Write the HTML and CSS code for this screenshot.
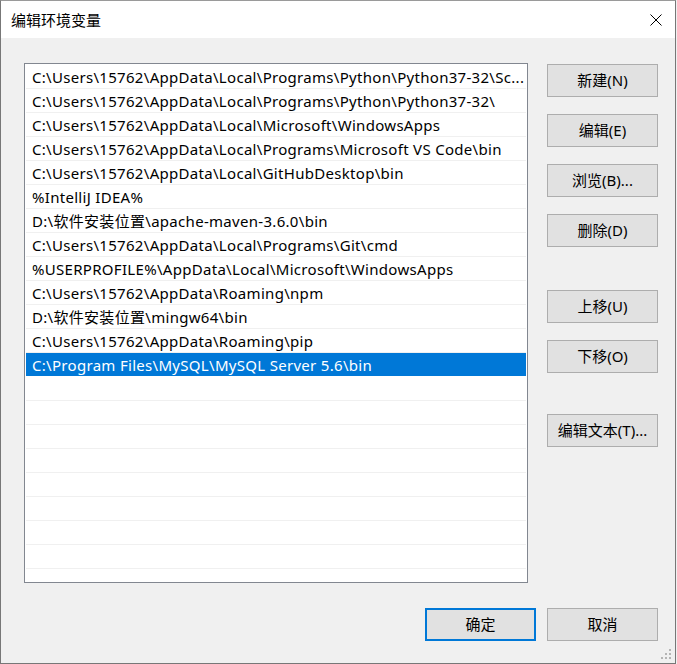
FILE: index.html
```html
<!DOCTYPE html>
<html lang="zh-CN">
<head>
<meta charset="utf-8">
<title>编辑环境变量</title>
<link rel="stylesheet" href="styles.css">
</head>
<body>
<div class="window">
  <div class="titlebar">
    <span class="title">编辑环境变量</span>
    <svg class="close" width="12" height="12" viewBox="0 0 12 12"><path d="M0.5 0.5 L11.5 11.5 M11.5 0.5 L0.5 11.5" stroke="#000" stroke-width="1" fill="none"/></svg>
  </div>
  <div class="main">
    <div class="list">
      <div class="row">C:\Users\15762\AppData\Local\Programs\Python\Python37-32\Sc...</div>
      <div class="row">C:\Users\15762\AppData\Local\Programs\Python\Python37-32\</div>
      <div class="row">C:\Users\15762\AppData\Local\Microsoft\WindowsApps</div>
      <div class="row">C:\Users\15762\AppData\Local\Programs\Microsoft VS Code\bin</div>
      <div class="row">C:\Users\15762\AppData\Local\GitHubDesktop\bin</div>
      <div class="row">%IntelliJ IDEA%</div>
      <div class="row">D:\软件安装位置\apache-maven-3.6.0\bin</div>
      <div class="row">C:\Users\15762\AppData\Local\Programs\Git\cmd</div>
      <div class="row">%USERPROFILE%\AppData\Local\Microsoft\WindowsApps</div>
      <div class="row">C:\Users\15762\AppData\Roaming\npm</div>
      <div class="row">D:\软件安装位置\mingw64\bin</div>
      <div class="row">C:\Users\15762\AppData\Roaming\pip</div>
      <div class="row selected">C:\Program Files\MySQL\MySQL Server 5.6\bin</div>
      <div class="row"></div>
      <div class="row"></div>
      <div class="row"></div>
      <div class="row"></div>
      <div class="row"></div>
      <div class="row"></div>
      <div class="row"></div>
      <div class="row"></div>
      <div class="row"></div>
    </div>
    <div class="actions">
      <button class="btn">新建(N)</button>
      <button class="btn gap-s">编辑(E)</button>
      <button class="btn gap-s">浏览(B)...</button>
      <button class="btn gap-s">删除(D)</button>
      <button class="btn gap-l">上移(U)</button>
      <button class="btn gap-s">下移(O)</button>
      <button class="btn gap-m">编辑文本(T)...</button>
    </div>
  </div>
  <div class="footer">
    <button class="btn default">确定</button>
    <button class="btn">取消</button>
  </div>
  <svg class="grip" width="12" height="12" viewBox="0 0 12 12">
    <rect x="8" y="0" width="2" height="2" fill="#b4b4b4"/>
    <rect x="4" y="4" width="2" height="2" fill="#b4b4b4"/>
    <rect x="8" y="4" width="2" height="2" fill="#b4b4b4"/>
    <rect x="0" y="8" width="2" height="2" fill="#b4b4b4"/>
    <rect x="4" y="8" width="2" height="2" fill="#b4b4b4"/>
    <rect x="8" y="8" width="2" height="2" fill="#b4b4b4"/>
  </svg>
</div>
</body>
</html>
```

FILE: styles.css
```css
* { box-sizing: border-box; }
html, body {
  margin: 0;
  padding: 0;
  background: #f0f0f0;
}
body {
  font-family: "Noto Sans", "Noto Sans CJK SC", sans-serif;
  font-size: 15px;
  color: #000;
}
.window {
  position: relative;
  width: 676px;
  height: 664px;
  border: 1px solid #777;
  border-top-color: #9a9a9a;
  background: #f0f0f0;
  display: flex;
  flex-direction: column;
}
.titlebar {
  height: 37px;
  background: #fff;
  display: flex;
  align-items: center;
  justify-content: space-between;
  padding: 0 13px 0 10px;
  flex: none;
}
.title {
  font-family: "Noto Sans CJK SC", sans-serif;
  font-size: 15px;
  line-height: 20px;
}
.close { display: block; }
.main {
  display: flex;
  align-items: flex-start;
  padding: 25px 0 0 23px;
  flex: none;
}
.list {
  width: 504px;
  height: 520px;
  border: 1px solid #828790;
  background: #fff;
  padding: 1px;
  overflow: hidden;
  flex: none;
}
.row {
  height: 24px;
  border-bottom: 1px solid #f0f0f0;
  padding: 1px 0 0 6px;
  line-height: 23px;
  letter-spacing: 0.3px;
  white-space: nowrap;
  overflow: hidden;
}
.row.selected {
  background: #0078d7;
  color: #fff;
  border-bottom-color: #fff;
}
.actions {
  display: flex;
  flex-direction: column;
  margin-left: 19px;
  margin-top: 1px;
}
.btn {
  width: 111px;
  height: 33px;
  background: #e1e1e1;
  border: 1px solid #adadad;
  border-radius: 0;
  font-family: "Noto Sans", "Noto Sans CJK SC", sans-serif;
  font-size: 15px;
  color: #000;
  padding: 0 0 2px 0;
  margin: 0;
  flex: none;
}
.gap-s { margin-top: 17px; }
.gap-l { margin-top: 43px; }
.gap-m { margin-top: 41px; }
.footer {
  display: flex;
  justify-content: flex-end;
  gap: 11px;
  padding: 25px 17px 0 0;
}
.btn.default {
  border: 2px solid #0078d7;
}
.grip {
  position: absolute;
  right: 2px;
  bottom: 2px;
}
```
